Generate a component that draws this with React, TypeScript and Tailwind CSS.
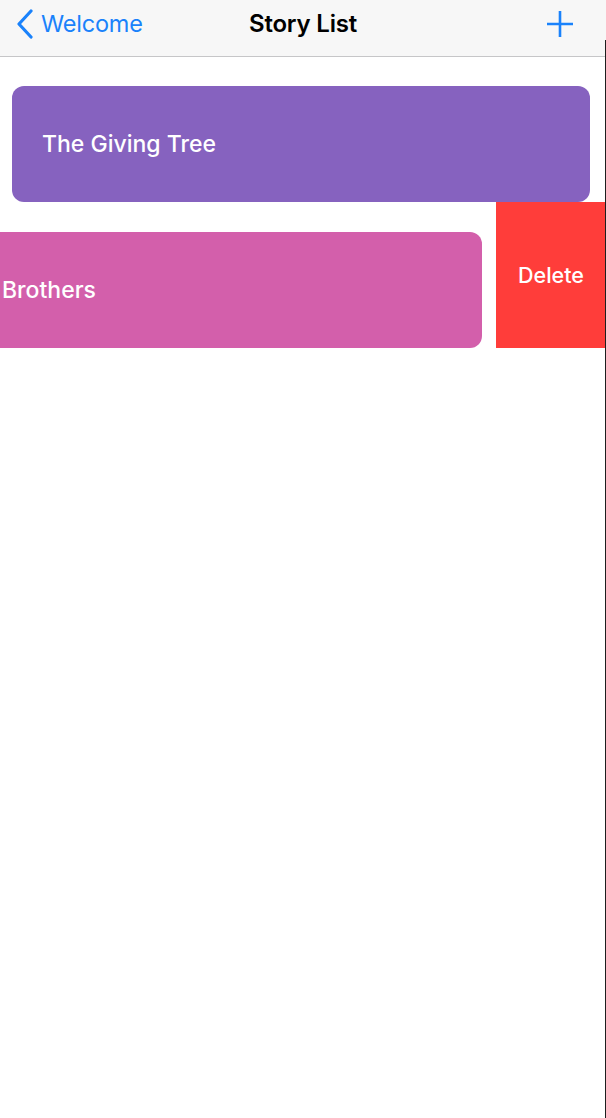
import React from 'react';

const font = { fontFamily: 'Inter, "Noto Sans", "Liberation Sans", sans-serif' };

const NavBar = () => (
  <div className="h-[57px] shrink-0 flex items-center justify-between border-b border-[#c6c6c8] bg-[#f7f7f7] relative pb-[8px]">
    <div className="flex items-center pl-[14px] text-[#1a82fb]">
      <svg width="22" height="30" viewBox="0 0 22 30" fill="none">
        <path d="M17 2 L5 15 L17 28" stroke="#1a82fb" strokeWidth="3.2" strokeLinecap="round" strokeLinejoin="round" />
      </svg>
      <span className="ml-[5px] text-[23.5px] leading-none tracking-[-0.2px]">Welcome</span>
    </div>
    <div className="absolute left-0 right-0 top-0 h-[48px] flex items-center justify-center pointer-events-none">
      <span className="text-[24px] font-semibold text-black leading-none tracking-[-0.2px]">Story List</span>
    </div>
    <div className="pr-[32px]">
      <svg width="28" height="28" viewBox="0 0 28 28" fill="none">
        <path d="M14 1 V27 M1 14 H27" stroke="#1a82fb" strokeWidth="2.6" />
      </svg>
    </div>
  </div>
);

export default function App() {
  return (
    <div className="w-[606px] h-[1118px] bg-white relative overflow-hidden flex flex-col" style={font}>
      <NavBar />
      <div className="flex flex-col pt-[29px]">
        <div className="mx-[12px] mr-[16px] h-[116px] rounded-[12px] bg-[#8662bf] flex items-center pl-[30px]">
          <span className="text-white text-[23px] font-medium">The Giving Tree</span>
        </div>
        <div className="h-[146px] flex">
          <div className="w-[482px] pt-[30px]">
            <div className="h-[116px] rounded-r-[12px] bg-[#d35fab] flex items-center pl-[2px]">
              <span className="text-white text-[23px] font-medium">Brothers</span>
            </div>
          </div>
          <div className="ml-[14px] flex-1 bg-[#ff3d3a] flex items-center justify-center">
            <span className="text-white text-[21.5px] font-medium">Delete</span>
          </div>
        </div>
      </div>
      <div className="absolute right-0 top-[40px] bottom-0 w-px bg-[#1e1e1e]" />
    </div>
  );
}
